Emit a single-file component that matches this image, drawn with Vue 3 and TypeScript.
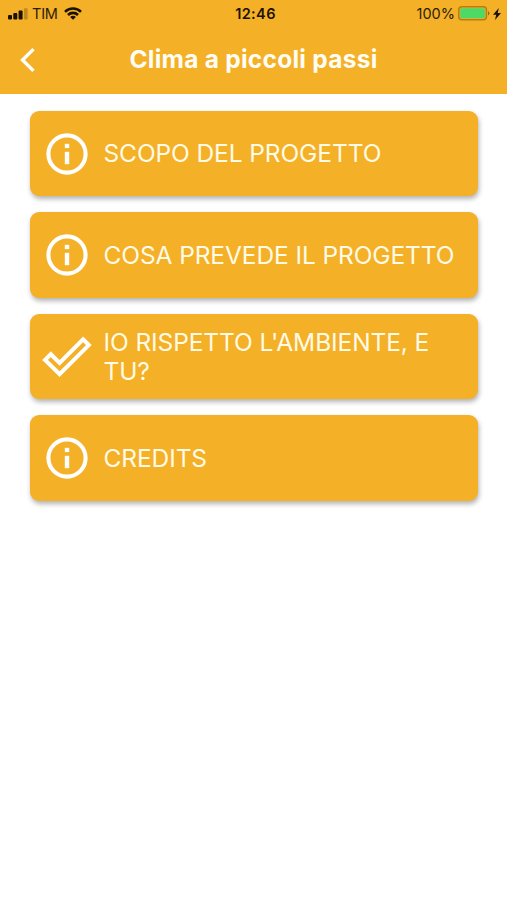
<script setup lang="ts">
interface MenuItem {
  label: string
  icon: 'info' | 'check'
}

const items: MenuItem[] = [
  { label: 'SCOPO DEL PROGETTO', icon: 'info' },
  { label: 'COSA PREVEDE IL PROGETTO', icon: 'info' },
  { label: "IO RISPETTO L'AMBIENTE, E TU?", icon: 'check' },
  { label: 'CREDITS', icon: 'info' },
]
</script>

<template>
  <div class="screen">
    <header class="header">
      <div class="status">
        <div class="status-left">
          <svg class="signal" width="20" height="12" viewBox="0 0 20 12">
            <rect x="0" y="7" width="4" height="4.5" rx="1" />
            <rect x="5.3" y="5" width="4" height="6.5" rx="1" />
            <rect x="10.6" y="2.6" width="4" height="8.9" rx="1" />
            <rect x="16" y="0.2" width="3.6" height="11.3" rx="1" opacity="0.25" />
          </svg>
          <span class="carrier">TIM</span>
          <svg class="wifi" width="18" height="13" viewBox="0 0 18 13">
            <g fill="none" stroke="#1a1205" stroke-width="2.6">
              <path d="M1 4.8C5.4 0.4 12.6 0.4 17 4.8" />
              <path d="M4 8C6.8 5.2 11.2 5.2 14 8" />
            </g>
            <path d="M6.1 9.9C7.7 8.4 10.3 8.4 11.9 9.9L9 12.7Z" />
          </svg>
        </div>
        <span class="time">12:46</span>
        <div class="status-right">
          <span class="percent">100%</span>
          <svg class="battery" width="32" height="15" viewBox="0 0 32 15">
            <rect x="0.8" y="0.8" width="27.6" height="13" rx="3" fill="none" stroke="#b57d14" stroke-width="1.5" />
            <rect x="2.3" y="2.3" width="24.6" height="10" rx="1.4" fill="#4cd964" />
            <path d="M30 5.3C31.8 5.7 31.8 9 30 9.4Z" fill="#8e6110" />
          </svg>
          <svg class="bolt" width="8" height="12" viewBox="0 0 8 12">
            <path d="M5.8 0L0 6.8H3.2L2 12L8 5H4.7Z" />
          </svg>
        </div>
      </div>
      <div class="navbar">
        <button class="back" aria-label="Indietro">
          <svg width="16" height="26" viewBox="0 0 16 26">
            <path d="M13.5 2.1L2.5 13L13.5 23.9" fill="none" stroke="#fff" stroke-width="3.4" />
          </svg>
        </button>
        <h1 class="title">Clima a piccoli passi</h1>
      </div>
    </header>

    <main class="menu">
      <button v-for="item in items" :key="item.label" class="card">
        <svg v-if="item.icon === 'info'" class="icon" width="50" height="50" viewBox="0 0 50 50">
          <circle cx="25" cy="25" r="18.6" fill="none" stroke="#fff" stroke-width="4.1" />
          <rect x="22.8" y="14.8" width="4.4" height="4.3" fill="#fff" />
          <rect x="22.8" y="22.8" width="4.4" height="12.4" fill="#fff" />
        </svg>
        <svg v-else class="icon" width="50" height="50" viewBox="0 0 50 50">
          <path
            d="M3.5 27L9.2 21.3L18 30L41.5 6.5L47.2 12.2L18 41.3Z"
            transform="translate(-0.4 0.9)"
            fill="none"
            stroke="#fff"
            stroke-width="4.1"
          />
        </svg>
        <span class="label">{{ item.label }}</span>
      </button>
    </main>
  </div>
</template>

<style>
body {
  background: #fff;
}
</style>

<style scoped>
.screen {
  width: 507px;
  height: 900px;
  overflow: hidden;
  background: #fff;
  font-family: Inter, "Liberation Sans", sans-serif;
}

.header {
  height: 94px;
  background: #f4b027;
}

.status {
  display: grid;
  grid-template-columns: 1fr auto 1fr;
  align-items: center;
  height: 27px;
  padding: 0 6px 0 8px;
  font-size: 14.5px;
  line-height: 18px;
  color: #2b1e07;
}

.status svg {
  display: block;
  fill: #1a1205;
}

.status-left,
.status-right {
  display: flex;
  align-items: center;
}

.status-right {
  justify-content: flex-end;
}

.carrier {
  margin-left: 4px;
  letter-spacing: -0.2px;
}

.wifi {
  margin-left: 6.5px;
}

.time {
  padding-left: 2px;
  font-weight: 600;
  color: #1a1205;
  letter-spacing: 0.4px;
}

.battery {
  margin-left: 3px;
}

.bolt {
  margin-left: 3px;
}

.navbar {
  display: grid;
  grid-template-columns: 60px 1fr 60px;
  align-items: center;
  height: 65px;
}

.back {
  display: flex;
  width: 16px;
  margin-left: 20px;
  padding: 0;
  border: 0;
  background: none;
}

.title {
  margin: 0;
  padding-bottom: 2px;
  font-size: 24.5px;
  font-weight: 700;
  line-height: 30px;
  letter-spacing: 0.25px;
  text-align: center;
  white-space: nowrap;
  color: #fffdf4;
}

.menu {
  display: flex;
  flex-direction: column;
  gap: 16.4px;
  padding: 17px 29.5px 0 30px;
}

.card {
  display: flex;
  align-items: center;
  box-sizing: border-box;
  height: 85.1px;
  padding: 0 12px;
  border: 0;
  border-radius: 9px;
  background: #f4b027;
  box-shadow: 1px 3px 5px rgba(0, 0, 0, 0.3);
  font-family: inherit;
  text-align: left;
}

.icon {
  flex: none;
}

.label {
  flex: 1;
  margin-left: 11.5px;
  padding-top: 1px;
  font-size: 24.5px;
  line-height: 29.5px;
  letter-spacing: -0.1px;
  color: #fffbe6;
}
</style>
